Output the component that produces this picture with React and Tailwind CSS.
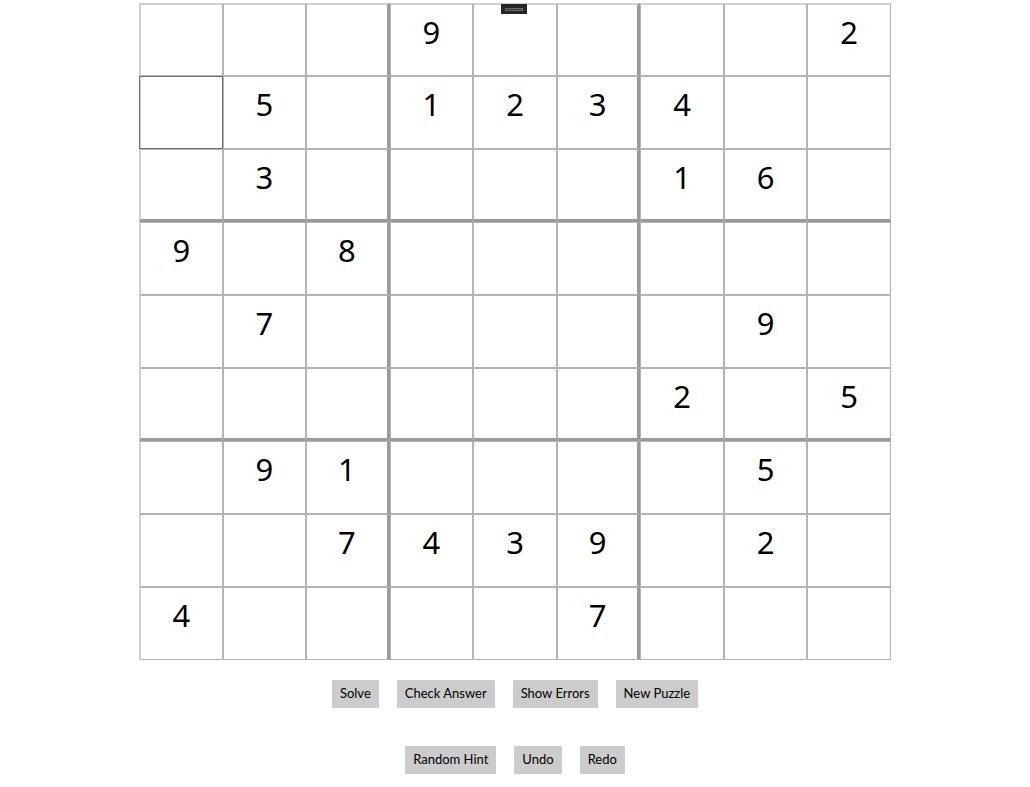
import React from 'react';

const puzzle = [
  '000900002',
  '050123400',
  '030000160',
  '908000000',
  '070000090',
  '000000205',
  '091000050',
  '007439020',
  '400007000',
];

const Cell = ({ value, row, col, focused }) => {
  const right = col === 2 || col === 5 ? 'border-r-[3px] border-r-[#9a9a9a]' : 'border-r border-r-[#b4b4b4]';
  const bottom = row === 2 || row === 5 ? 'border-b-[3px] border-b-[#9a9a9a]' : 'border-b border-b-[#b4b4b4]';
  const left = col === 0 ? 'border-l-2 border-l-[#d0d0d0]' : 'border-l border-l-[#b4b4b4]';
  const top = row === 0 ? 'border-t-2 border-t-[#d0d0d0]' : 'border-t border-t-[#b4b4b4]';
  return (
    <div className={`relative bg-white ${left} ${top} ${right} ${bottom} ${focused ? 'outline outline-1 -outline-offset-1 outline-[#6e6e6e]' : ''}`}>
      <div className="pt-[7px] text-center text-[31px] leading-[40px] text-black">
        {value !== '0' ? value : ''}
      </div>
    </div>
  );
};

const Button = ({ children }) => (
  <button className="h-7 bg-[#cccccc] px-2 font-['Lato',sans-serif] text-[13px] text-black">{children}</button>
);

export default function App() {
  return (
    <div className="min-h-screen bg-white pt-[3px] font-['Noto_Sans','Open_Sans',sans-serif]">
      <div className="relative mx-auto grid h-[657px] w-[752px] grid-cols-9 grid-rows-9">
        {puzzle.map((line, r) =>
          line.split('').map((v, c) => (
            <Cell key={`${r}-${c}`} value={v} row={r} col={c} focused={r === 1 && c === 0} />
          ))
        )}
        {/* small drag handle over the top edge */}
        <div className="absolute left-[362px] top-[1px] flex h-[10px] w-[26px] items-center justify-center bg-[#262626]">
          <div className="h-[3px] w-[18px] border border-[#6a6a6a] bg-[#3a3a3a]" />
        </div>
      </div>
      <div className="mt-5 flex justify-center gap-[18px]">
        <Button>Solve</Button>
        <Button>Check Answer</Button>
        <Button>Show Errors</Button>
        <Button>New Puzzle</Button>
      </div>
      <div className="mt-[38px] flex justify-center gap-[18px]">
        <Button>Random Hint</Button>
        <Button>Undo</Button>
        <Button>Redo</Button>
      </div>
    </div>
  );
}
